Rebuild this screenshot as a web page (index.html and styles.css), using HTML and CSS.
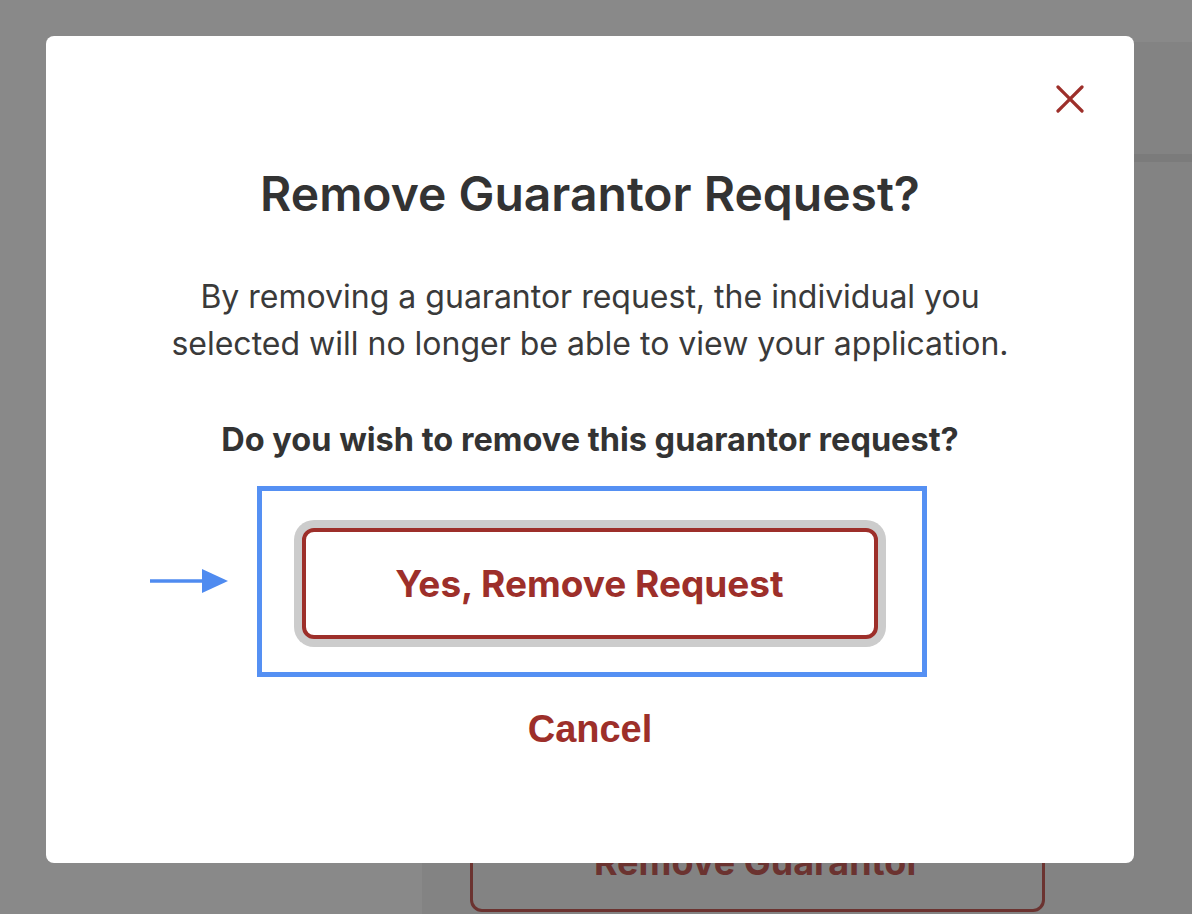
FILE: index.html
```html
<!DOCTYPE html>
<html lang="en">
<head>
<meta charset="utf-8">
<title>Remove Guarantor Request</title>
<link rel="stylesheet" href="styles.css">
</head>
<body>
<div class="page">
  <div class="panel">
    <div class="panel-header"></div>
    <div class="panel-body"></div>
    <div class="panel-footer">
      <button class="back-btn">Remove Guarantor</button>
    </div>
  </div>
</div>

<div class="modal">
  <button class="close" aria-label="Close">
    <svg width="28" height="28" viewBox="0 0 28 28"><path d="M2 2 L26 26 M26 2 L2 26" stroke="#9d2f2a" stroke-width="3.2" stroke-linecap="round" fill="none"/></svg>
  </button>
  <h1 class="title">Remove Guarantor Request?</h1>
  <p class="text">By removing a guarantor request, the individual you<br>selected will no longer be able to view your application.</p>
  <p class="question">Do you wish to remove this guarantor request?</p>
  <div class="highlight">
    <button class="confirm">Yes, Remove Request</button>
  </div>
  <button class="cancel">Cancel</button>
  <svg class="arrow" width="80" height="26" viewBox="0 0 80 26"><line x1="0" y1="13" x2="56" y2="13" stroke="#4f8bf0" stroke-width="3.4"/><polygon points="52,1 78,13 52,25" fill="#4f8bf0"/></svg>
</div>
</body>
</html>
```

FILE: styles.css
```css
* { box-sizing: border-box; }
html, body { margin: 0; padding: 0; }
body {
  background: #898989;
  font-family: Inter, "Noto Sans", sans-serif;
  width: 1192px;
  height: 914px;
  overflow: hidden;
}
.page {
  padding-top: 42px;
  padding-left: 422px;
  height: 914px;
}
.panel {
  background: #838383;
  height: 872px;
  display: flex;
  flex-direction: column;
}
.panel-header {
  flex-shrink: 0;
  height: 120px;
  border-bottom: 8px solid #7b7b7b;
}
.panel-body { flex: 1; }
.panel-footer {
  flex-shrink: 0;
  padding: 0 0 2px 48px;
}
.back-btn {
  width: 575px;
  height: 100px;
  border: 3px solid #6b3330;
  border-radius: 12px;
  background: transparent;
  color: #6b3330;
  font-family: Inter, sans-serif;
  font-weight: 700;
  font-size: 36px;
  padding: 0;
}
.modal {
  position: fixed;
  left: 46px;
  top: 36px;
  width: 1088px;
  height: 827px;
  background: #fff;
  border-radius: 8px;
  display: flex;
  flex-direction: column;
  align-items: center;
  padding-top: 129px;
  color: #333;
}
.close {
  position: absolute;
  right: 50px;
  top: 49px;
  width: 28px;
  height: 28px;
  padding: 0;
  border: 0;
  background: none;
  display: flex;
}
.title {
  margin: 0;
  font-size: 48px;
  line-height: 58px;
  font-weight: 600;
  color: #333;
}
.text {
  margin: 50px 0 0;
  font-size: 32px;
  line-height: 47px;
  text-align: center;
  color: #3a3a3a;
  font-weight: 400;
}
.question {
  margin: 49px 0 0;
  font-size: 32.5px;
  line-height: 47px;
  font-weight: 700;
  color: #333;
}
.highlight {
  margin: 23px 0 0 3px;
  width: 670px;
  border: 5px solid #5590f3;
  padding: 29px 36px 25px 32px;
}
.confirm {
  display: block;
  width: 576px;
  height: 111px;
  margin: 8px;
  border: 4px solid #9d2f2a;
  border-radius: 12px;
  box-shadow: 0 0 0 8px #cccccc;
  background: #fff;
  color: #9d2f2a;
  font-family: Inter, sans-serif;
  font-weight: 700;
  font-size: 37px;
}
.cancel {
  margin-top: 30px;
  border: 0;
  background: none;
  padding: 0;
  font-family: "Liberation Sans", Arial, sans-serif;
  font-weight: 700;
  font-size: 38px;
  line-height: 44px;
  color: #9d2f2a;
}
.arrow {
  position: absolute;
  left: 104px;
  top: 532px;
}
```
